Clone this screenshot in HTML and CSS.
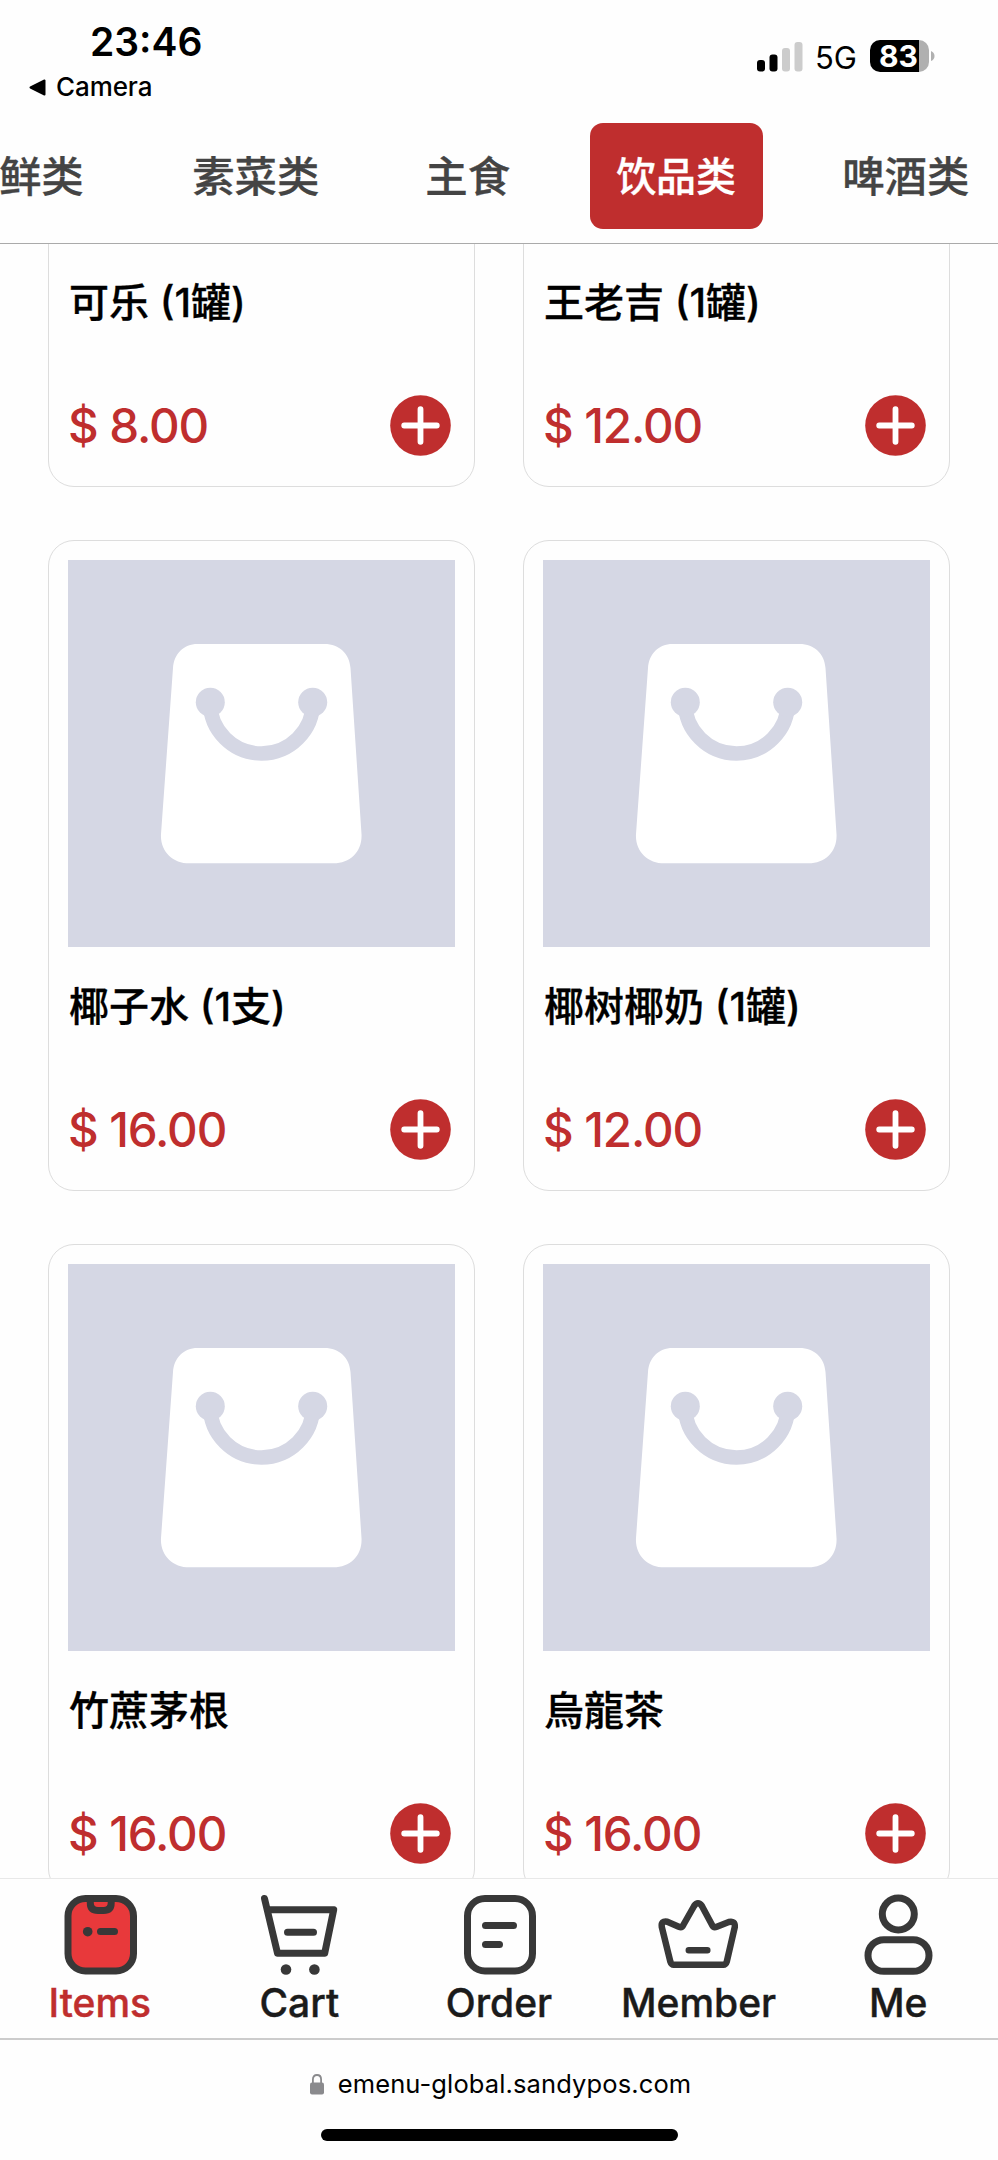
FILE: index.html
```
<!DOCTYPE html>
<html lang="zh-CN">
<head>
<meta charset="utf-8">
<title>Menu</title>
<link rel="stylesheet" href="styles.css">
</head>
<body>
<svg width="0" height="0" class="defs" aria-hidden="true">
  <symbol id="bag" viewBox="0 0 387 387">
    <path fill="#fff" d="M129.500 84H256.500C271.500 84 281.500 94 282.500 108L293.500 274C294.500 291 282.500 303.300 265.500 303.300H121.500C104.500 303.300 92 291 93 274L105 108C106 94 115.500 84 129.500 84Z"/>
    <path fill="none" stroke="#d5d7e4" stroke-width="14.500" d="M142 142A51.500 51.500 0 0 0 245 142"/>
    <circle cx="142.300" cy="142.300" r="14.500" fill="#d5d7e4"/><circle cx="244.700" cy="142.300" r="14.500" fill="#d5d7e4"/>
  </symbol>
  <symbol id="plus" viewBox="0 0 61 61">
    <circle cx="30.500" cy="30.500" r="30.300" fill="#bf2e2e"/>
    <path d="M14.200 30.500H46.800M30.500 14.200V46.800" stroke="#fff" stroke-width="5.800" stroke-linecap="round"/>
  </symbol>
</svg>
<div class="screen">
  <header class="status">
    <div class="status-left">
      <div class="time">23:46</div>
      <div class="back"><svg width="17" height="17" viewBox="0 0 17 17"><path d="M1.500 8.500L15.500 1.500V15.500Z" stroke="#000" stroke-width="2" stroke-linejoin="round"/></svg><span>Camera</span></div>
    </div>
    <div class="status-right">
      <svg class="signal" width="46" height="30" viewBox="0 0 46 30"><rect y="18" width="8" height="11.500" rx="3"/><rect x="12.500" y="12.500" width="8" height="17" rx="3"/><rect x="25" y="6" width="8" height="23.500" rx="3" fill="#ccc"/><rect x="37.500" width="8" height="29.500" rx="3" fill="#ccc"/></svg>
      <span class="net">5G</span>
      <div class="battery"><span>83</span></div>
      <svg width="4" height="10" viewBox="0 0 4 10"><path d="M0 0Q3.500 1.500 3.500 5T0 10Z" fill="#b0b0b0"/></svg>
    </div>
  </header>
  <nav class="tabs">
    <div class="tab">海鲜类</div><div class="tab">素菜类</div><div class="tab">主食</div><div class="tab active">饮品类</div><div class="tab">啤酒类</div>
  </nav>
  <main class="list">
    <div class="grid">
      <article class="card"><svg class="pic"><use href="#bag"/></svg><h3>可乐 (1罐)</h3><div class="buy"><span>$ 8.00</span><svg class="plus"><use href="#plus"/></svg></div></article>
      <article class="card"><svg class="pic"><use href="#bag"/></svg><h3>王老吉 (1罐)</h3><div class="buy"><span>$ 12.00</span><svg class="plus"><use href="#plus"/></svg></div></article>
      <article class="card"><svg class="pic"><use href="#bag"/></svg><h3>椰子水 (1支)</h3><div class="buy"><span>$ 16.00</span><svg class="plus"><use href="#plus"/></svg></div></article>
      <article class="card"><svg class="pic"><use href="#bag"/></svg><h3>椰树椰奶 (1罐)</h3><div class="buy"><span>$ 12.00</span><svg class="plus"><use href="#plus"/></svg></div></article>
      <article class="card"><svg class="pic"><use href="#bag"/></svg><h3>竹蔗茅根</h3><div class="buy"><span>$ 16.00</span><svg class="plus"><use href="#plus"/></svg></div></article>
      <article class="card"><svg class="pic"><use href="#bag"/></svg><h3 lang="zh-TW">烏龍茶</h3><div class="buy"><span>$ 16.00</span><svg class="plus"><use href="#plus"/></svg></div></article>
    </div>
  </main>
  <nav class="bottom">
    <div class="item on">
      <svg class="icon" viewBox="0 0 80 80"><rect x="8" y="3.500" width="65.500" height="72.500" rx="17.500" fill="#e8393b"/><path d="M30.300 4V8Q30.300 15.500 38 15.500H43.500Q51.200 15.500 51.200 8V4M40.500 36.500H54.500"/><circle class="dot" cx="27.700" cy="36.700" r="4.800"/></svg>
      <span>Items</span></div>
    <div class="item">
      <svg class="icon" viewBox="0 0 80 80"><path d="M5.500 3.500L18.500 58.200H65.700L74.700 14.800H9M28.500 37.200H54.500"/><circle class="dot" cx="27" cy="74.500" r="5.300"/><circle class="dot" cx="55.400" cy="74.500" r="5.300"/></svg>
      <span>Cart</span></div>
    <div class="item">
      <svg class="icon" viewBox="0 0 80 80"><rect x="8.500" y="3.500" width="65" height="72.500" rx="17.500"/><path d="M26.500 30.500H54.500M26.500 49.500H40.500"/></svg>
      <span>Order</span></div>
    <div class="item">
      <svg class="icon crown" viewBox="0.700 0 80 80"><path d="M35.800 11Q39.700 5.500 43.600 11L53.800 30Q55.300 33 58.500 31.700L70.500 27Q77 25.500 76.500 32L68.500 66.500Q67.500 69.700 65 69.700H15.500Q13 69.700 12 66.500L3.500 32Q2.500 25.500 9 26.700L20.500 31.700Q23.500 33 25 30ZM30.500 55.200H49"/></svg>
      <span>Member</span></div>
    <div class="item">
      <svg class="icon" viewBox="0 0 80 80"><circle cx="40.300" cy="19" r="16"/><rect x="10" y="44.700" width="61" height="31.600" rx="15.800"/></svg>
      <span>Me</span></div>
  </nav>
  <footer class="browser">
    <div class="url"><svg width="15" height="21" viewBox="0 0 15 21"><rect y="8.500" width="14" height="12" rx="2" fill="#8a8a8d"/><path d="M2.900 9V5.500Q2.900 1 7 1T11.100 5.500V9" fill="none" stroke="#8a8a8d" stroke-width="1.800"/></svg><span>emenu-global.sandypos.com</span></div>
    <div class="home"></div>
  </footer>
</div>
</body>
</html>
```
FILE: styles.css
```
* { box-sizing: border-box; }
body { margin: 0; background: #fff; font-family: Inter, "Noto Sans CJK SC", sans-serif; color: #000; }
.defs { position: absolute; }
.screen { width: 998px; height: 2160px; overflow: hidden; display: flex; flex-direction: column; background: #fefefe; }

.status { height: 109px; flex: none; display: flex; justify-content: space-between; }
.status-left { padding: 18px 0 0 29px; }
.time { font-size: 39px; line-height: 48px; font-weight: 600; margin-left: 61px; }
.back { display: flex; align-items: center; gap: 10px; font-size: 26px; line-height: 32px; margin-top: 5px; font-weight: 500; letter-spacing: -.1px; }
.status-right { display: flex; align-items: center; height: 32px; margin: 40px 63px 0 0; }
.net { font-size: 31px; line-height: 32px; margin: 3px 13px 0 12px; }
.signal { margin-top: 1px; }
.battery { width: 59px; height: 32px; border-radius: 10px; background: linear-gradient(90deg, #000 49px, #b0b0b0 49px); color: #fff; font-size: 30px; line-height: 33px; font-weight: 700; padding-left: 9px; margin-right: 2px; }

.tabs { height: 135px; flex: none; display: flex; align-items: center; gap: 53px; border-bottom: 1px solid #aaa; padding: 0 0 1px; overflow: hidden; }
.tab { flex: none; font-size: 42.400px; line-height: 102px; height: 106px; color: #444; -webkit-text-stroke: .3px currentColor; font-weight: 500; padding: 0 26.500px; font-family: "Noto Sans CJK SC", sans-serif; }
.tab:first-child { margin: 0 2.500px 0 -70px; }
.tab.active { font-size: 40px; color: #fff; background: #bf2e2e; border-radius: 13px; }

.list { height: 1634px; flex: none; overflow: hidden; }
.grid { display: grid; grid-template-columns: 427px 427px; gap: 53px 48px; margin: -408px 0 0 48px; }
.card { height: 651px; border: 1px solid #ddd; border-radius: 26px; padding: 19px; }
.pic { display: block; width: 387px; height: 387px; background: #d5d7e4; }
.card h3 { margin: 30px 0 0 1px; font-size: 40px; line-height: 60px; font-weight: 500; -webkit-text-stroke: .3px currentColor; white-space: nowrap; }
.card h3:lang(zh-TW) { font-family: Inter, "Noto Sans CJK TC", sans-serif; }
.buy { display: flex; align-items: center; justify-content: space-between; margin: 62px 4.500px 0 0; height: 61px; color: #bf2e2e; font-size: 47.500px; font-weight: 500; letter-spacing: -1.100px; }
.plus { width: 61px; height: 61px; }

.bottom { height: 162px; flex: none; display: flex; border-top: 1px solid #e8e8e8; border-bottom: 2px solid #ccc; }
.item { flex: 1; display: flex; flex-direction: column; align-items: center; padding-top: 16px; font-size: 39px; line-height: 48px; font-weight: 500; color: #1b1b1b; }
.item span { margin-top: 4px; -webkit-text-stroke: .4px currentColor; }
.item.on { color: #bf2e2e; }
.icon { width: 80px; height: 80px; fill: none; stroke: #383838; stroke-width: 7; stroke-linecap: round; stroke-linejoin: round; overflow: visible; }
.crown { stroke-width: 6.500; }
.icon .dot { fill: #383838; stroke: none; }

.browser { flex: 1; display: flex; flex-direction: column; align-items: center; padding-top: 28px; }
.url { display: flex; align-items: center; gap: 13px; font-size: 25.500px; line-height: 32px; letter-spacing: .12px; margin-left: 3px; }
.home { width: 357px; height: 12px; border-radius: 6px; background: #000; margin-top: 29px; }
```
